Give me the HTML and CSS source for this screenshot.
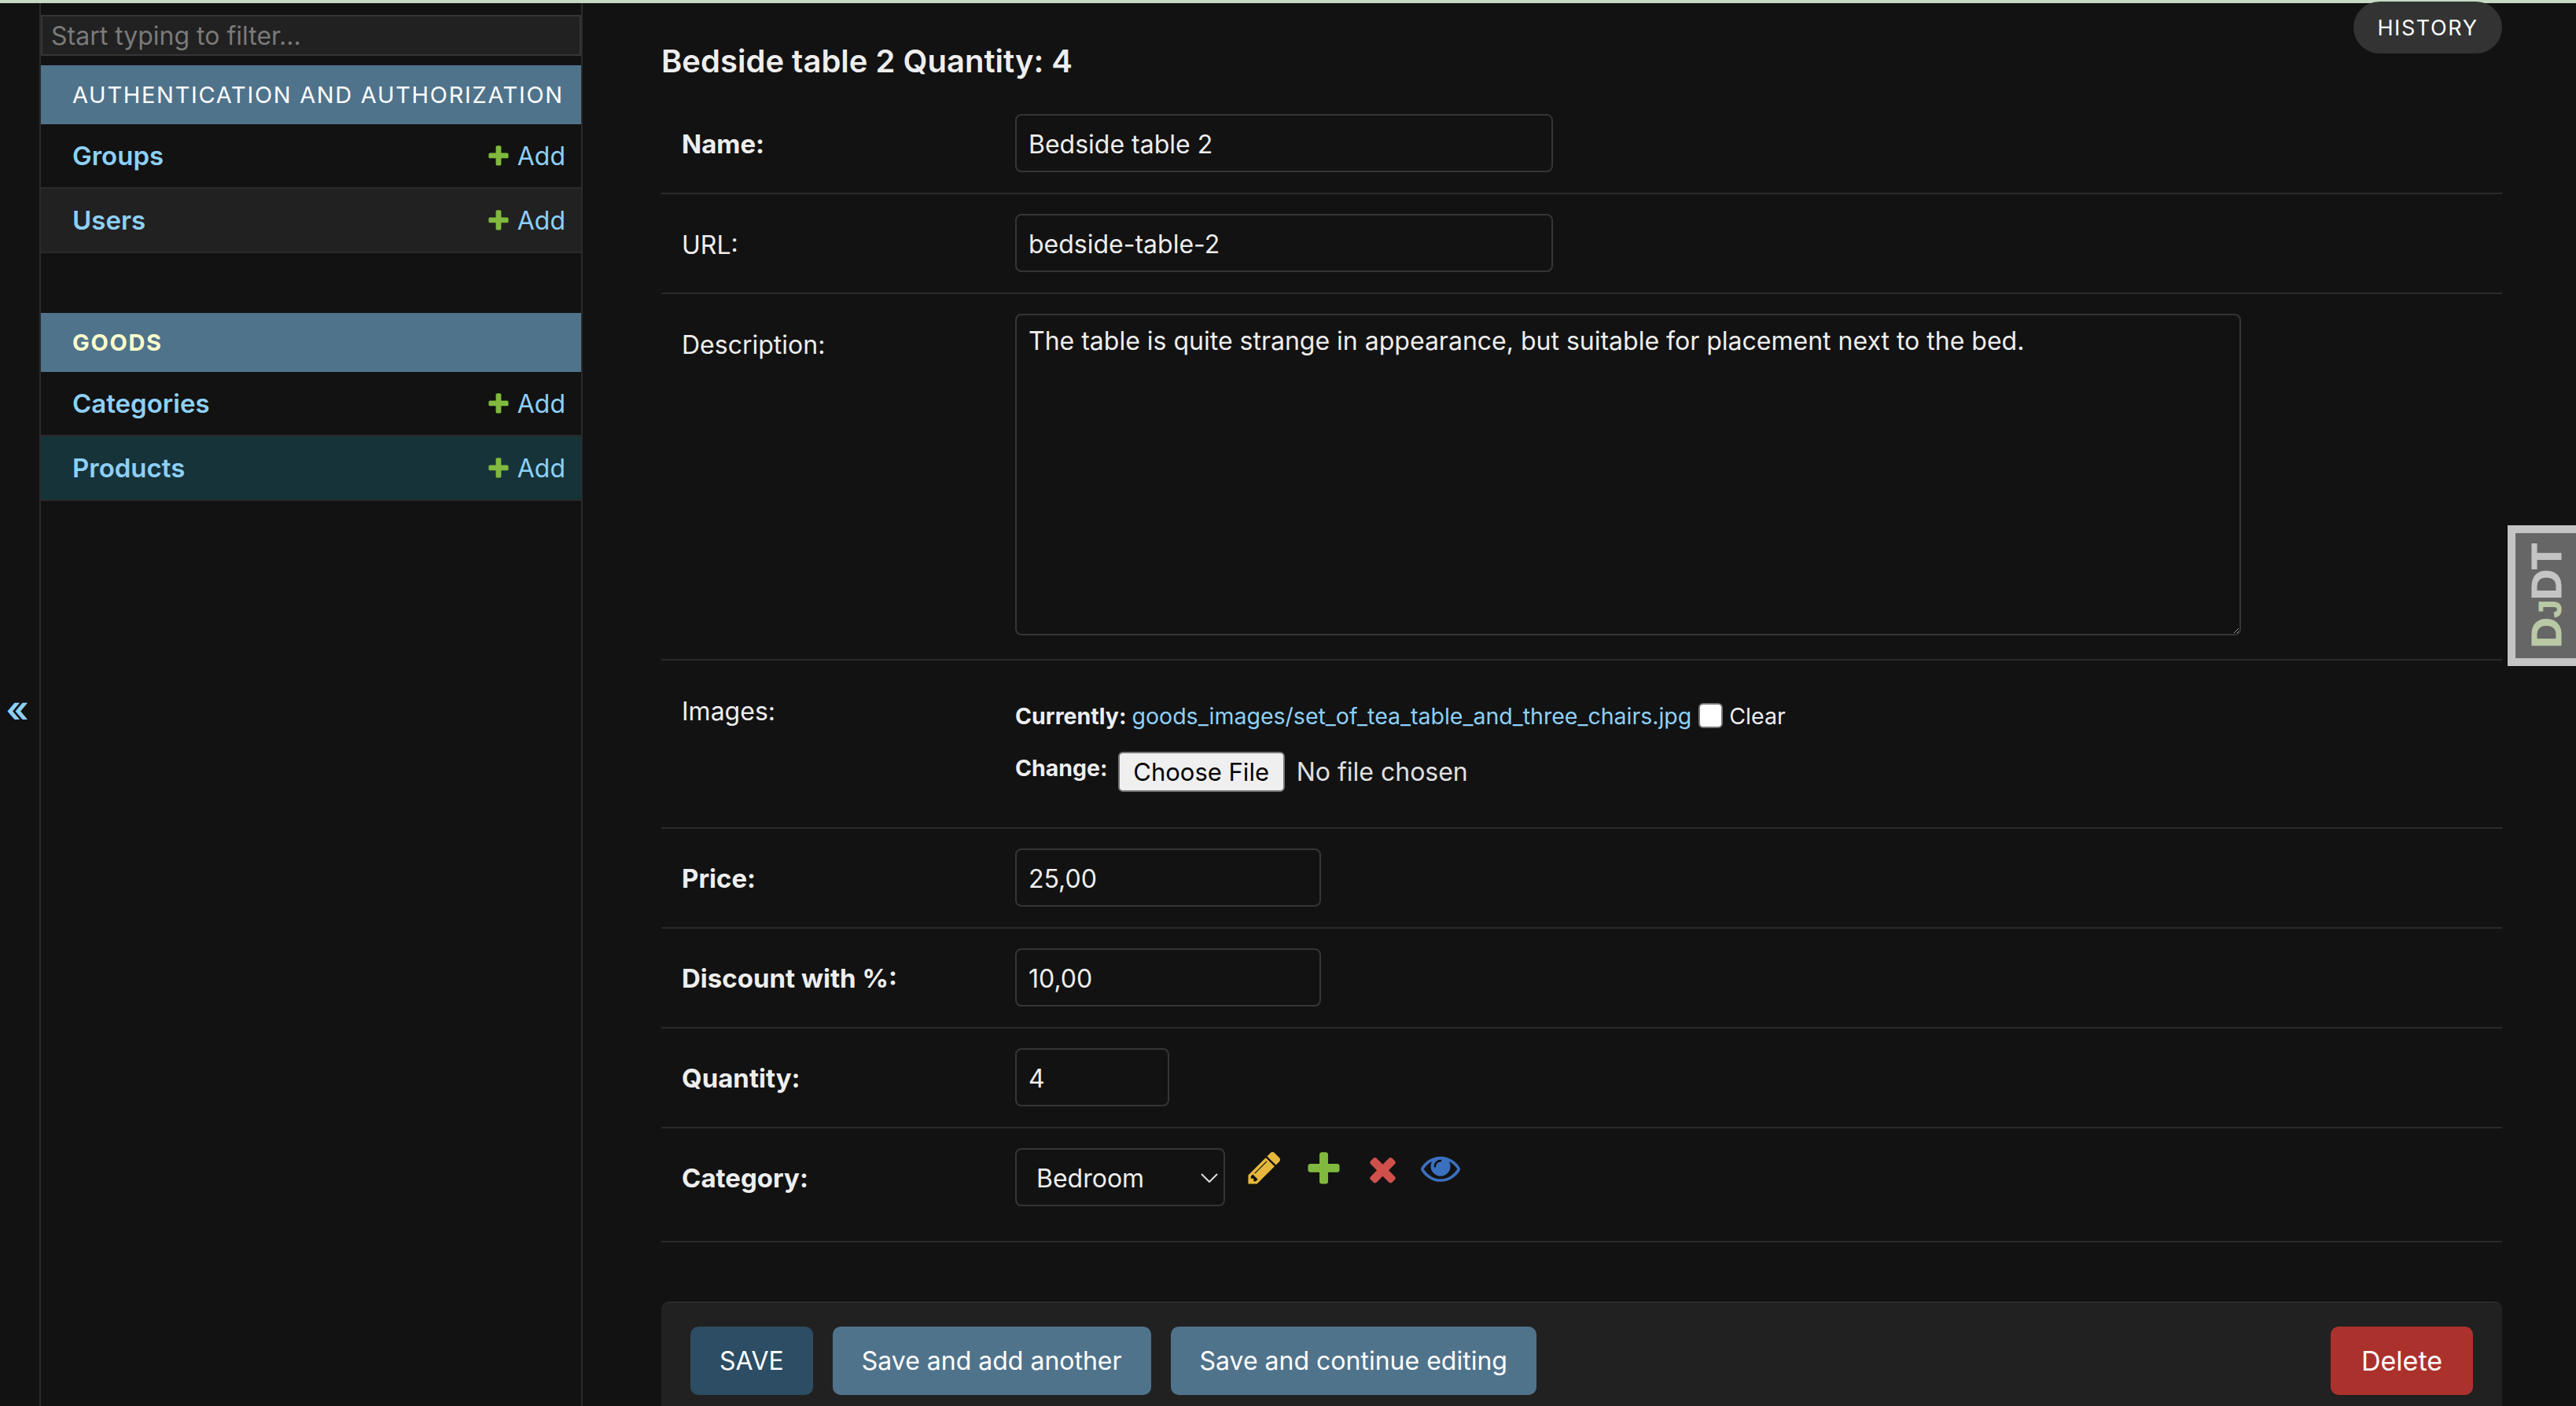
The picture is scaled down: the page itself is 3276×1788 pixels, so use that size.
FILE: index.html
```html
<!DOCTYPE html>
<html lang="en">
<head>
	<meta charset="utf-8">
	<title>Change product</title>
	<link rel="stylesheet" href="styles.css">
</head>
<body>
	<svg class="defs" width="0" height="0">
		<symbol id="i-plus" viewBox="0 0 1792 1792"><path d="M1600 796v192q0 40-28 68t-68 28h-416v416q0 40-28 68t-68 28h-192q-40 0-68-28t-28-68v-416h-416q-40 0-68-28t-28-68v-192q0-40 28-68t68-28h416v-416q0-40 28-68t68-28h192q40 0 68 28t28 68v416h416q40 0 68 28t28 68z"/></symbol>
	</svg>
	<div class="topbar"></div>
	<div class="layout">
		<div class="toggle"><span>«</span></div>
		<nav class="sidebar">
			<input class="filter" type="text" placeholder="Start typing to filter...">
			<div class="app">
				<div class="app-head">AUTHENTICATION AND AUTHORIZATION</div>
				<div class="model"><a class="model-name">Groups</a><a class="add"><svg class="add-icon"><use href="#i-plus"/></svg>Add</a></div>
				<div class="model alt"><a class="model-name">Users</a><a class="add"><svg class="add-icon"><use href="#i-plus"/></svg>Add</a></div>
			</div>
			<div class="app">
				<div class="app-head current">GOODS</div>
				<div class="model"><a class="model-name">Categories</a><a class="add"><svg class="add-icon"><use href="#i-plus"/></svg>Add</a></div>
				<div class="model selected"><a class="model-name">Products</a><a class="add"><svg class="add-icon"><use href="#i-plus"/></svg>Add</a></div>
			</div>
		</nav>
		<main class="main">
			<div class="title-row">
				<h2 class="title">Bedside table 2 Quantity: 4</h2>
				<a class="history">HISTORY</a>
			</div>
			<form>
				<div class="row">
					<label class="label req">Name:</label>
					<input class="field w-long" type="text" value="Bedside table 2">
				</div>
				<div class="row">
					<label class="label">URL:</label>
					<input class="field w-long" type="text" value="bedside-table-2">
				</div>
				<div class="row row-desc">
					<label class="label">Description:</label>
					<textarea class="field area">The table is quite strange in appearance, but suitable for placement next to the bed.</textarea>
				</div>
				<div class="row row-images">
					<label class="label">Images:</label>
					<div class="file-box">
						<div class="file-current">
							<b>Currently:</b>
							<a>goods_images/set_of_tea_table_and_three_chairs.jpg</a>
							<input class="check" type="checkbox">
							<span>Clear</span>
						</div>
						<div class="file-change">
							<b>Change:</b>
							<input class="file" type="file">
						</div>
					</div>
				</div>
				<div class="row">
					<label class="label req">Price:</label>
					<input class="field w-num" type="text" value="25,00">
				</div>
				<div class="row">
					<label class="label req">Discount with %:</label>
					<input class="field w-num" type="text" value="10,00">
				</div>
				<div class="row">
					<label class="label req">Quantity:</label>
					<input class="field w-qty" type="text" value="4">
				</div>
				<div class="row row-cat">
					<label class="label req">Category:</label>
					<div class="pick-wrap">
						<select class="field pick"><option>Bedroom</option></select>
						<svg class="chevron" viewBox="0 0 22 12"><path d="M1 1l10 10L21 1"/></svg>
					</div>
					<div class="rel-links">
						<svg class="rel pencil" viewBox="0 0 1792 1792"><path d="M491 1536l91-91-235-235-91 91v107h128v128h107zm523-928q0-22-22-22-10 0-17 7l-542 542q-7 7-7 17 0 22 22 22 10 0 17-7l542-542q7-7 7-17zm-54-192l416 416-832 832h-416v-416zm683 96q0 53-37 90l-166 166-416-416 166-165q36-38 90-38 53 0 91 38l235 234q37 39 37 91z"/></svg>
						<svg class="rel plus"><use href="#i-plus"/></svg>
						<svg class="rel cross" viewBox="0 0 1792 1792"><path d="M1490 1322q0 40-28 68l-136 136q-28 28-68 28t-68-28l-294-294-294 294q-28 28-68 28t-68-28l-136-136q-28-28-28-68t28-68l294-294-294-294q-28-28-28-68t28-68l136-136q28-28 68-28t68 28l294 294 294-294q28-28 68-28t68 28l136 136q28 28 28 68t-28 68l-294 294 294 294q28 28 28 68z"/></svg>
						<svg class="rel eye" viewBox="0 0 1792 1792"><path d="M1664 960q-152-236-381-353 61 104 61 225 0 185-131.500 316.500t-316.500 131.500-316.500-131.500-131.500-316.500q0-121 61-225-229 117-381 353 133 205 333.500 326.500t434.500 121.500 434.500-121.500 333.500-326.500zm-720-384q0-20-14-34t-34-14q-125 0-214.500 89.500t-89.500 214.500q0 20 14 34t34 14 34-14 14-34q0-86 61-147t147-61q20 0 34-14t14-34zm848 384q0 34-20 69-140 230-376.500 368.500t-499.500 138.500-499.500-139-376.500-368q-20-35-20-69t20-69q140-229 376.500-368t499.500-139 499.500 139 376.500 368q20 35 20 69z"/></svg>
					</div>
				</div>
				<div class="submit-row">
					<a class="btn btn-save">SAVE</a>
					<a class="btn">Save and add another</a>
					<a class="btn">Save and continue editing</a>
					<a class="btn btn-delete">Delete</a>
				</div>
			</form>
		</main>
	</div>
	<div class="djdt"><span class="dj">D<small>J</small></span>DT</div>
</body>
</html>
```

FILE: styles.css
```css
html, body {
	margin: 0;
	height: 100%;
	overflow: hidden;
	background: #121212;
}
body {
	font-family: Inter, "Noto Sans", sans-serif;
	font-size: 32px;
	color: #eeeeee;
}
.defs {
	position: absolute;
}
.topbar {
	height: 4px;
	background: #c6dbc2;
}
.layout {
	display: flex;
	height: 1784px;
}

/* left column */
.toggle {
	width: 52px;
	flex: none;
	display: flex;
	align-items: center;
	justify-content: center;
	padding: 10px 6px 0 0;
	box-sizing: border-box;
	border-right: 2px solid #2a2a2a;
	color: #8ed0f6;
	font-size: 46px;
	font-weight: 600;
	line-height: 1;
}
.sidebar {
	width: 687px;
	flex: none;
	border-right: 2px solid #2a2a2a;
	padding-top: 15px;
}
.filter {
	display: block;
	box-sizing: border-box;
	width: 687px;
	height: 52px;
	padding: 0 11px;
	margin: 0 0 12px;
	background: #212121;
	border: 2px solid #353535;
	color: #eeeeee;
	font: 32px Inter, sans-serif;
}
.filter::placeholder {
	color: #7a7a7a;
}
.app {
	margin-bottom: 76px;
}
.app-head {
	box-sizing: border-box;
	width: 687px;
	height: 75px;
	padding-left: 40px;
	display: flex;
	align-items: center;
	background: #50738c;
	color: #ffffff;
	font-size: 29px;
	letter-spacing: 1.68px;
	white-space: nowrap;
}
.app-head.current {
	color: #ffffcc;
	font-weight: 700;
}
.model {
	box-sizing: border-box;
	height: 82px;
	padding: 0 20px 0 40px;
	display: flex;
	align-items: center;
	justify-content: space-between;
	border-bottom: 2px solid #2a2a2a;
}
.model.alt {
	background: #212121;
}
.model.selected {
	background: #16333a;
}
.model-name {
	color: #8ed0f6;
	font-size: 33px;
	font-weight: 600;
}
.add {
	display: flex;
	align-items: center;
	gap: 8px;
	color: #8ed0f6;
}
.add-icon {
	width: 32px;
	height: 32px;
	fill: #81b93f;
}

/* form */
.main {
	flex: 1;
	padding: 0 94px 0 100px;
	min-width: 0;
}
.title-row {
	display: flex;
	justify-content: space-between;
	align-items: flex-start;
	height: 116px;
}
.title {
	margin: 50px 0 0;
	font-size: 40px;
	line-height: 48px;
	font-weight: 600;
}
.history {
	box-sizing: border-box;
	width: 189px;
	height: 66px;
	margin-top: -2px;
	display: flex;
	align-items: center;
	justify-content: center;
	border-radius: 33px;
	background: #333333;
	color: #ffffff;
	font-size: 27px;
	letter-spacing: 1.6px;
}
.row {
	display: flex;
	align-items: flex-start;
	padding: 25px 26px 26px;
	border-bottom: 2px solid #2a2a2a;
}
.label {
	width: 424px;
	height: 74px;
	flex: none;
	line-height: 79px;
}
.label.req {
	font-size: 33px;
	font-weight: 700;
	line-height: 77px;
}
.field {
	display: block;
	box-sizing: border-box;
	height: 74px;
	padding: 2px 15px 0;
	background: #121212;
	border: 2px solid #353535;
	border-radius: 8px;
	color: #eeeeee;
	font: 32px Inter, sans-serif;
	outline: none;
}
.w-long {
	width: 684px;
}
.w-num {
	width: 389px;
}
.w-qty {
	width: 196px;
}
.area {
	width: 1559px;
	height: 409px;
	padding: 15px;
	line-height: 36px;
}
.row-desc {
	padding-bottom: 30px;
}
.row-images {
	padding-bottom: 45px;
}
.file-box {
	font-size: 28.5px;
}
.file-current {
	display: flex;
	align-items: center;
	height: 32px;
	margin-top: 29px;
}
.file-current b {
	margin-right: 7px;
}
.file-current a {
	color: #8ed0f6;
}
.check {
	appearance: none;
	box-sizing: border-box;
	width: 31px;
	height: 32px;
	margin: 0 8px 0 9px;
	background: #ffffff;
	border: 2px solid #767676;
	border-radius: 6px;
}
.file-change {
	display: flex;
	align-items: flex-start;
	margin-top: 30px;
}
.file-change b {
	line-height: 42px;
	margin-right: 13px;
}
.file {
	font: 32px Inter, sans-serif;
	color: #e0e0e0;
	height: 51px;
}
.file::file-selector-button {
	height: 51px;
	width: 212px;
	margin-right: 15px;
	border: 2px solid #767676;
	border-radius: 6px;
	background: #efefef;
	color: #000000;
	font: 31px Inter, sans-serif;
	padding: 0;
}
.row-cat {
	padding-bottom: 44px;
}
.pick-wrap {
	position: relative;
}
.pick {
	appearance: none;
	width: 267px;
	padding-left: 25px;
}
.chevron {
	position: absolute;
	left: 236px;
	top: 32px;
	width: 22px;
	height: 12px;
	fill: none;
	stroke: #dddddd;
	stroke-width: 2;
}
.rel-links {
	display: flex;
	align-items: flex-start;
}
.rel {
	display: block;
}
.pencil {
	width: 48px;
	height: 48px;
	fill: #e6b83c;
	margin: 1px 0 0 26px;
}
.plus {
	width: 51px;
	height: 51px;
	fill: #81b93f;
	margin: 0 0 0 26px;
}
.cross {
	width: 49px;
	height: 49px;
	fill: #d0504c;
	margin: 2px 0 0 25px;
}
.eye {
	width: 50px;
	height: 50px;
	fill: #3b70bf;
	margin: 0 0 0 24px;
}
.submit-row {
	display: flex;
	gap: 25px;
	margin-top: 75px;
	height: 133px;
	box-sizing: border-box;
	padding: 30px 37px 0;
	background: #212121;
	border-top: 2px solid #2a2a2a;
	border-radius: 10px 10px 0 0;
}
.btn {
	height: 87px;
	padding: 0 37px;
	display: flex;
	align-items: center;
	border-radius: 10px;
	background: #50738c;
	color: #ffffff;
	white-space: nowrap;
}
.btn-save {
	background: #2c4d63;
}
.btn-delete {
	margin-left: auto;
	padding: 0 39px;
	background: #ab322c;
	font-size: 34px;
}

/* debug toolbar handle */
.djdt {
	position: absolute;
	right: 0;
	top: 668px;
	box-sizing: border-box;
	width: 87px;
	height: 179px;
	border: 10px solid #c4c4c4;
	border-right: 0;
	background: #666666;
	color: #c4c4c4;
	display: flex;
	align-items: center;
	justify-content: center;
	writing-mode: sideways-lr;
	font: bold 54px "Liberation Sans", sans-serif;
	line-height: 1;
	-webkit-text-stroke: 1px currentColor;
}
.dj {
	color: #b9c9a6;
}
.dj small {
	font-size: 40px;
}
```
